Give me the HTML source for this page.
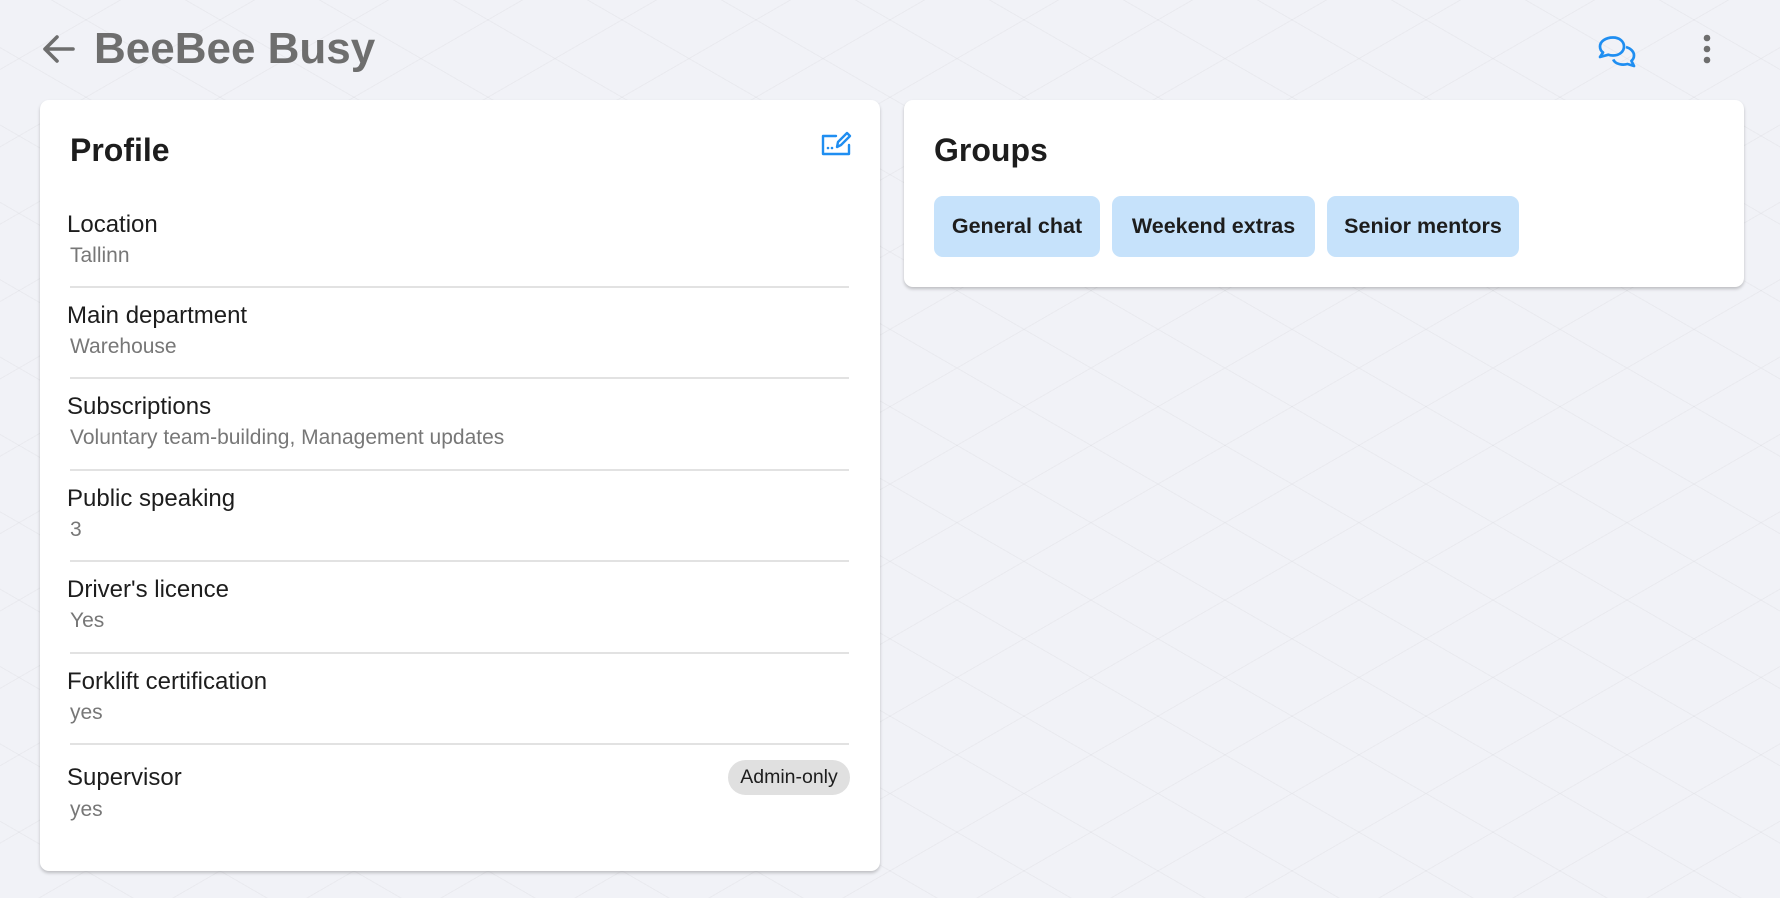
<!DOCTYPE html>
<html><head><meta charset="utf-8"><style>
*{box-sizing:border-box;margin:0;padding:0}
body{width:1780px;height:898px;overflow:hidden;background:#f1f2f7;font-family:"Liberation Sans",Roboto,sans-serif;position:relative;color:#1d1d1d}
.bg{position:absolute;inset:0;background-image:repeating-linear-gradient(30deg,transparent 0 66px,rgba(0,0,0,0.03) 66px 67px),repeating-linear-gradient(-30deg,transparent 0 66px,rgba(0,0,0,0.03) 66px 67px)}
.card{position:absolute;background:#fff;border-radius:9px;box-shadow:0 2px 3px rgba(0,0,0,.22)}
.title{position:absolute;left:94px;top:24px;font-size:44px;font-weight:bold;color:#6e6e6e}
h2{position:absolute;font-size:32px;font-weight:bold;color:#1d1d1d}
.lab{position:absolute;left:27px;font-size:24px;color:#1d1d1d}
.val{position:absolute;left:30px;font-size:21px;color:#777}
.div{position:absolute;left:30px;right:31px;height:2px;background:#e2e2e2}
.chip{position:absolute;top:96px;height:61px;background:#c6e2fb;border-radius:9px;font-size:21.5px;font-weight:bold;line-height:61px;text-align:center;color:#1d1d1d}
</style></head><body>
<div class="bg"></div>
<svg style="position:absolute;left:40px;top:33px" width="36" height="32" viewBox="0 0 36 32"><path d="M33 16H5M17 4L5 16l12 12" fill="none" stroke="#6e6e6e" stroke-width="3.6" stroke-linecap="round" stroke-linejoin="round"/></svg>
<div class="title">BeeBee Busy</div>
<svg style="position:absolute;left:1597px;top:35px" width="42" height="36" viewBox="0 0 42 36"><g fill="none" stroke="#1f8ef1" stroke-width="2.7" stroke-linejoin="round"><path d="M16 2.5c6.5 0 11 4 11 9s-4.5 9-11 9c-1.8 0-3.3-.3-4.6-.8L3 22l3-4.5C4 16 3 14 3 11.5c0-5 5.5-9 13-9z"/><path d="M29 12c5 1.5 8 4.8 8 8.5 0 2.2-1 4-2.6 5.4L37 31l-6.5-2c-1.4.4-2.8.6-4.3.6-4.8 0-8.6-2-10-5.2"/></g></svg>
<svg style="position:absolute;left:1700px;top:34px" width="14" height="32"><circle cx="7" cy="4" r="3.3" fill="#6e6e6e"/><circle cx="7" cy="15" r="3.3" fill="#6e6e6e"/><circle cx="7" cy="26" r="3.3" fill="#6e6e6e"/></svg>

<div class="card" style="left:40px;top:100px;width:840px;height:771px">
<h2 style="left:30px;top:32px">Profile</h2>
<svg style="position:absolute;left:780px;top:30px" width="32" height="28" viewBox="0 0 32 28"><g fill="none" stroke="#1f8ef1" stroke-width="2.4" stroke-linecap="round" stroke-linejoin="round"><path d="M16 6H3v18h26v-9"/><path d="M17 17l1-5 9-9 3 3-9 9z"/></g><circle cx="8" cy="18" r="1.3" fill="#1f8ef1"/><circle cx="12" cy="18" r="1.3" fill="#1f8ef1"/></svg>
<div class="lab" style="top:111px">Location</div><div class="val" style="top:144px">Tallinn</div><div class="div" style="top:186px"></div>
<div class="lab" style="top:202px">Main department</div><div class="val" style="top:235px">Warehouse</div><div class="div" style="top:277px"></div>
<div class="lab" style="top:293px">Subscriptions</div><div class="val" style="top:326px">Voluntary team-building, Management updates</div><div class="div" style="top:369px"></div>
<div class="lab" style="top:385px">Public speaking</div><div class="val" style="top:418px">3</div><div class="div" style="top:460px"></div>
<div class="lab" style="top:476px">Driver's licence</div><div class="val" style="top:509px">Yes</div><div class="div" style="top:552px"></div>
<div class="lab" style="top:568px">Forklift certification</div><div class="val" style="top:601px">yes</div><div class="div" style="top:643px"></div>
<div class="lab" style="top:664px">Supervisor</div><div class="val" style="top:698px">yes</div>
<div style="position:absolute;left:688px;top:660px;width:122px;height:35px;border-radius:18px;background:#e0e0e0;font-size:19.5px;line-height:35px;text-align:center;color:#1d1d1d">Admin-only</div>
</div>

<div class="card" style="left:904px;top:100px;width:840px;height:187px">
<h2 style="left:30px;top:32px">Groups</h2>
<div class="chip" style="left:30px;width:166px">General chat</div>
<div class="chip" style="left:208px;width:203px">Weekend extras</div>
<div class="chip" style="left:423px;width:192px">Senior mentors</div>
</div>
</body></html>
